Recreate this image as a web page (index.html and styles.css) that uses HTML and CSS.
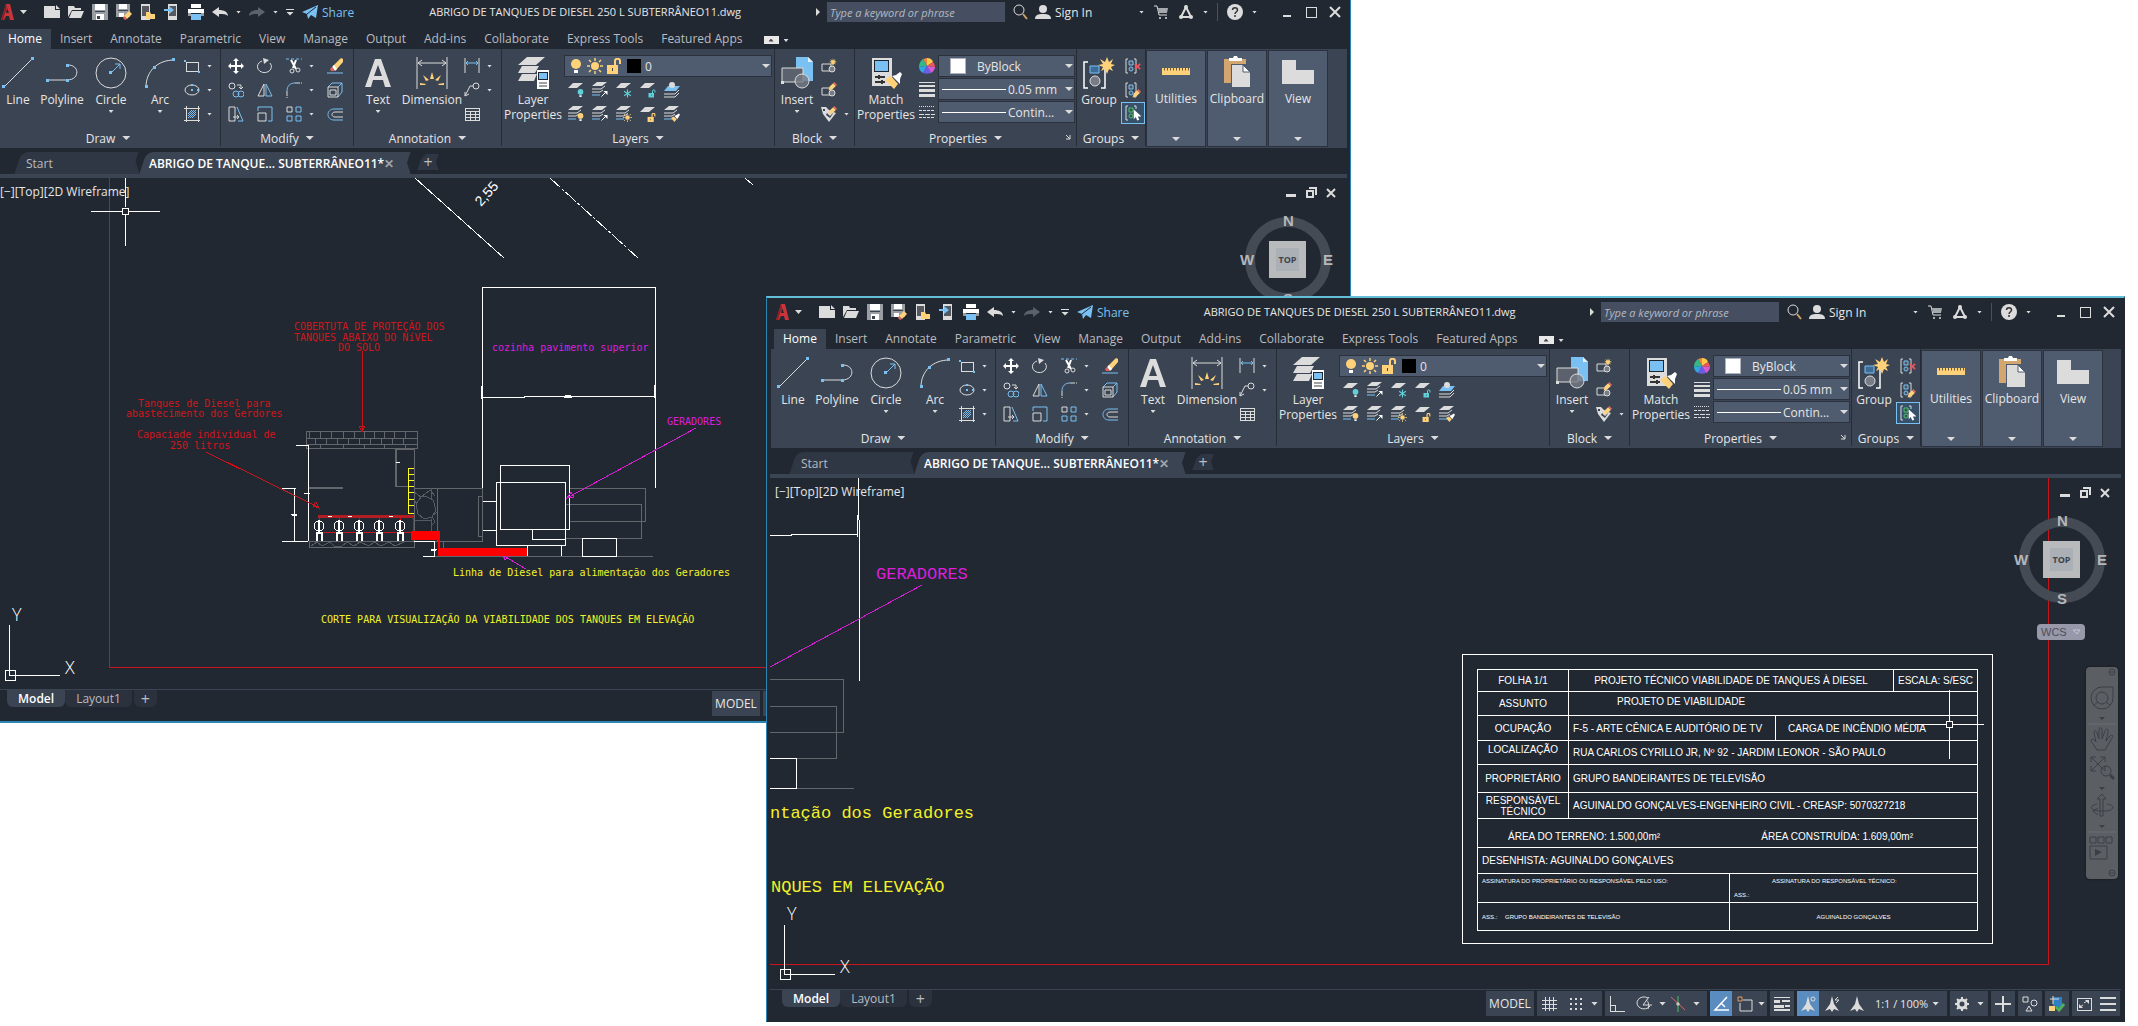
FILE: index.html
```
<!DOCTYPE html>
<html lang="pt-BR">

<head>
    <meta charset="UTF-8">
    <meta name="viewport" content="width=device-width, initial-scale=1.0">
    <title>ABRIGO DE TANQUES DE DIESEL 250 L SUBTERRÂNEO11.dwg</title>
    <link rel="stylesheet" href="styles.css">
</head>

<body>
    <!-- icon set -->
    <svg class="defs" aria-hidden="true">
        <symbol id="i-logo" viewBox="0 0 16 16"><path fill="#c9343a" d="M6 0h4l4 16h-4l-1-4H6l-2 4H1zM7 4L6 9h3z"/><path fill="#8d1f27" d="M6 0l-5 16h2L7 3z"/></symbol>
        <symbol id="i-new" viewBox="0 0 16 16"><path class="fw" d="M0 2h11v4h5v8H0z"/><path class="fw" d="M12 1l4 4h-4z"/></symbol>
        <symbol id="i-open" viewBox="0 0 16 16"><path class="fw" d="M0 2h6l1 2h6v2H4l-4 7z"/><path class="fw" d="M4 7h12l-3 7H1z"/></symbol>
        <symbol id="i-save" viewBox="0 0 16 16"><path fill="#9a9da1" d="M0 0h16v16H0z"/><path fill="#fff" d="M3 0h10v6H3zM4 10h8v6H4z"/><path class="fd" d="M3 7h10v1H3zM5 12h3v3H5z"/></symbol>
        <symbol id="i-saveas" viewBox="0 0 16 16"><path fill="#9a9da1" d="M0 0h14v13H0z"/><path fill="#fff" d="M3 0h8v5H3zM3 9h5v4H3z"/><path class="fd" d="M2 6h10v1H2z"/><path class="fy" d="M8 12l5-5 3 3-5 5z"/><path fill="#e0645c" d="M8 12l3 3-2 1-2-2z"/></symbol>
        <symbol id="i-openmob" viewBox="0 0 16 16"><path class="fw" d="M1 0h9v16H1z"/><path fill="#55585e" d="M2 2h7v10H2z"/><path class="fy" d="M6 8h4l1 2h4v5H6z"/></symbol>
        <symbol id="i-savemob" viewBox="0 0 16 16"><path class="fw" d="M4 0h9v16H4z"/><path fill="#55585e" d="M5 2h7v10H5z"/><path class="fb" d="M0 5h5V2l5 4-5 4V7H0z"/></symbol>
        <symbol id="i-print" viewBox="0 0 16 16"><path fill="#fff" d="M3 0h10v4H3zM0 5h16v7h-3V9H3v3H0z"/><path fill="#9a9da1" d="M0 9h3v3H0zM13 9h3v3h-3z"/><path class="fb" d="M3 10h10v6H3z"/></symbol>
        <symbol id="i-undo" viewBox="0 0 16 16"><path d="M0 8l7-5v3c5 0 9 2 9 6-2-2-5-2-9-2v3z"/></symbol>
        <symbol id="i-share" viewBox="0 0 16 16"><path class="fb" d="M0 8L16 1l-2 13-5-3-3 4-1-5z"/><path stroke="#222831" fill="none" d="M5 10l9-7"/></symbol>
        <symbol id="i-search" viewBox="0 0 16 16"><circle class="lw" cx="7" cy="6" r="5"/><path stroke="#cba36a" stroke-width="2" d="M11 10l4 5"/></symbol>
        <symbol id="i-user" viewBox="0 0 16 16"><circle class="fw" cx="8" cy="5" r="4"/><path class="fw" d="M0 15c0-4 3-5 8-5s8 1 8 5z"/></symbol>
        <symbol id="i-cart" viewBox="0 0 16 16"><path class="lw" d="M1 2h3l2 9h8"/><path fill="#a5a8ac" d="M5 4h10l-1 5H6z"/><circle class="fw" cx="7" cy="14" r="1"/><circle class="fw" cx="13" cy="14" r="1"/></symbol>
        <symbol id="i-apps" viewBox="0 0 16 16"><path fill="none" stroke="#dcdcdc" stroke-width="2" d="M8 3L3 13h10z"/><circle class="fw" cx="8" cy="3" r="2"/><circle class="fw" cx="3" cy="13" r="2"/><circle class="fw" cx="13" cy="13" r="2"/></symbol>
        <symbol id="i-help" viewBox="0 0 16 16"><circle class="fw" cx="8" cy="8" r="8"/><path fill="none" stroke="#333" stroke-width="1.5" d="M5.500 6c0-3 5-3 5 0 0 2-2.500 2-2.500 4M8 11v2"/></symbol>
        <symbol id="i-min" viewBox="0 0 12 12"><path class="fw" d="M2 9h8v2H2z"/></symbol>
        <symbol id="i-max" viewBox="0 0 12 12"><path class="lw crisp" d="M1 1h10v10H1z"/></symbol>
        <symbol id="i-close" viewBox="0 0 12 12"><path fill="none" stroke="#dcdcdc" stroke-width="2" d="M1 1l10 10M11 1L1 11"/></symbol>

        <symbol id="i-line" viewBox="0 0 32 32"><path class="lw" d="M2 30L30 2"/><path class="fb" d="M0 28h3v3H0zM29 0h3v3h-3z"/></symbol>
        <symbol id="i-pline" viewBox="0 0 32 32"><path class="lw" d="M2 23h19c13 0 13-15 1-15"/><path class="fb" d="M0 22h3v3H0zM20 22h3v3h-3zM20 7h3v3h-3z"/></symbol>
        <symbol id="i-circle" viewBox="0 0 32 32"><circle class="lw" cx="16" cy="16" r="15"/><path class="lb" d="M16 16l9-9M20 7h5v5"/><path class="fb" d="M14 14h3v3h-3z"/></symbol>
        <symbol id="i-arc" viewBox="0 0 32 32"><path class="lw" d="M2 30C2 14 14 3 30 3"/><path class="fb" d="M1 28h3v3H1zM9 9h3v3H9zM28 1h3v3h-3z"/></symbol>
        <symbol id="i-rect" viewBox="0 0 16 16"><path class="lw crisp" d="M2 4h12v9H2z"/><path class="fb" d="M0 2h2v2H0zM14 13h2v2h-2z"/></symbol>
        <symbol id="i-ellipse" viewBox="0 0 16 16"><ellipse class="lw" cx="8" cy="8" rx="7" ry="5"/><path class="fb" d="M7 7h2v2H7zM13 7h2v2h-2zM7 2h2v2H7z"/></symbol>
        <symbol id="i-hatch" viewBox="0 0 16 16"><path class="lw crisp" d="M2 0v16M14 0v16M0 2h16M0 14h16"/><path class="lb" d="M4 8l4-4M4 12l8-8M8 12l4-4M4 10l6-6M6 12l6-6"/></symbol>
        <symbol id="i-move" viewBox="0 0 16 16"><path fill="#fff" d="M8 0l3 3H9v4h4V5l3 3-3 3V9H9v4h2l-3 3-3-3h2V9H3v2L0 8l3-3v2h4V3H5z"/></symbol>
        <symbol id="i-rotate" viewBox="0 0 16 16"><path class="lw" d="M5 3a7 6 0 1 0 8 2"/><path class="fw" d="M6 0l6 2-5 4z"/></symbol>
        <symbol id="i-trim" viewBox="0 0 16 16"><path class="lb" stroke-dasharray="3 2" d="M0 1h16"/><path fill="none" stroke="#fff" stroke-width="2" d="M5 2l5 9M10 2L7 10"/><circle class="lw" cx="6" cy="13" r="2"/><circle class="lw" cx="12" cy="12" r="2"/></symbol>
        <symbol id="i-erase" viewBox="0 0 16 16"><path class="fy" d="M6 8l8-8 2 1v3l-7 8z"/><path fill="#fff" d="M5 9l2-2 3 4-2 2z"/><path fill="#e0645c" d="M3 11l2-2 3 4H4z"/><path class="lb" d="M0 15h16"/></symbol>
        <symbol id="i-copy" viewBox="0 0 16 16"><circle class="lw" cx="4" cy="4" r="3"/><path class="lw" d="M9 3h4v3M11 5l2 2 2-2"/><circle class="lb" cx="8" cy="12" r="3"/><circle class="lb" cx="13" cy="12" r="3"/></symbol>
        <symbol id="i-mirror" viewBox="0 0 16 16"><path class="lw" d="M7 2v12H1z"/><path class="lb" d="M9 2v12h6z"/></symbol>
        <symbol id="i-fillet" viewBox="0 0 16 16"><path class="lb" d="M1 9C1 4 4 1 9 1"/><path class="lw" stroke-dasharray="5 1" d="M1 9v7M9 1h7"/></symbol>
        <symbol id="i-box" viewBox="0 0 16 16"><path class="lb" d="M1 5l4-4h10v9l-4 5M15 1l-4 4"/><path class="lw" d="M1 5h10v10H1zM3 8h6v5H3z"/></symbol>
        <symbol id="i-stretch" viewBox="0 0 16 16"><path class="lw" d="M1 1h6v14H1zM5 11h6M9 9l2 2-2 2"/><path class="lb" d="M9 1l6 14h-5"/></symbol>
        <symbol id="i-scale" viewBox="0 0 16 16"><path class="lb" d="M1 5V1h14v14h-4"/><path class="lw" d="M1 7h8v8H1z"/></symbol>
        <symbol id="i-array" viewBox="0 0 16 16"><path class="lw" d="M1 1h5v5H1z"/><path class="lb" d="M10 1h5v5h-5zM1 10h5v5H1zM10 10h5v5h-5z"/></symbol>
        <symbol id="i-offset" viewBox="0 0 16 16"><path class="lb" d="M16 3H7c-8 0-8 11 0 11h9"/><path class="lw" d="M16 6H8c-4 0-4 5 0 5h8"/></symbol>
        <symbol id="i-text" viewBox="0 0 32 32"><path class="fw" d="M13 2h6l10 28h-6l-2-7H11l-2 7H3zM16 8l-4 11h8z"/></symbol>
        <symbol id="i-dim" viewBox="0 0 32 32"><path class="lw" d="M1 0v32M31 0v32M2 6h28M6 3L2 6l4 3M26 3l4 3-4 3"/><path class="fy" d="M14 22l2-7 2 7zM10 24l-3-6 6 5zM22 24l3-6-6 5zM9 28H4v-2l6 1zM23 28h5v-2l-6 1z"/></symbol>
        <symbol id="i-dimlin" viewBox="0 0 16 16"><path class="lw" d="M1 0v15M15 0v15"/><path class="lb" d="M2 5h12M4 3L2 5l2 2M12 3l2 2-2 2"/></symbol>
        <symbol id="i-leader" viewBox="0 0 16 16"><circle class="lw" cx="12" cy="4" r="3"/><path class="lw" d="M9 4H6l-5 10M1 10v4l4-2"/></symbol>
        <symbol id="i-table" viewBox="0 0 16 16"><path class="lw crisp" d="M1 2h14v12H1zM1 5h14M1 8h14M1 11h14M6 5v9M11 5v9"/></symbol>
        <symbol id="i-layers" viewBox="0 0 32 32"><path class="fw" d="M10 0h18l-9 8H1zM5 9h17l-4 7H1zM5 17h15l-3 7H1z"/><path fill="#fff" d="M20 13h12v19H20z"/><path fill="#1d2530" d="M21 15h10v8H21z"/><path class="fb" d="M22 16h8v6h-8z"/><path stroke="#444" d="M22 26h8M22 29h8"/></symbol>
        <symbol id="i-layer" viewBox="0 0 16 16"><path class="fw" d="M5 1h10L9 6H0z"/></symbol>
        <symbol id="i-stack" viewBox="0 0 16 16"><path class="fw" d="M5 0h10l-5 4H0z"/><path class="lw" d="M0 7h9l4-3M0 10h8l3-2"/><path class="lb" d="M0 13h8"/></symbol>
        <symbol id="i-bulb" viewBox="0 0 16 16"><circle cx="8" cy="6" r="5"/><path fill="#fff" d="M6 12h4v3H6z"/></symbol>
        <symbol id="i-sun" viewBox="0 0 16 16"><circle class="fy" cx="8" cy="8" r="4"/><path stroke="#ffd27a" stroke-width="1.500" d="M8 0v3M8 13v3M0 8h3M13 8h3M2 2l2 2M12 12l2 2M14 2l-2 2M4 12l-2 2"/></symbol>
        <symbol id="i-unlock" viewBox="0 0 16 16"><path d="M1 7h11v9H1z"/><path fill="none" stroke="currentColor" stroke-width="2" d="M9 7V3c0-3 5-3 5 0v3"/><path class="fd" d="M6 10h1v3H6z"/></symbol>
        <symbol id="i-flake" viewBox="0 0 16 16"><path stroke="#5fd0d8" stroke-width="2" d="M8 1v14M2 4l12 8M14 4L2 12"/></symbol>
        <symbol id="i-arrow" viewBox="0 0 16 16"><path stroke="#fff" stroke-width="2" d="M3 13L13 3"/><path fill="#fff" d="M7 2h8v8z"/></symbol>
        <symbol id="i-brush" viewBox="0 0 16 16"><path class="fy" d="M0 9l5-3 5 5-4 5z"/><path fill="#fff" d="M6 5l3-1 5-3 2 2-3 5-2 3z"/></symbol>
        <symbol id="i-insert" viewBox="0 0 32 32"><path class="fb" d="M15 0h12l5 5v19H15z"/><path fill="#dff0ff" d="M27 0v5h5z"/><path fill="#5b626d" stroke="#dcdcdc" d="M1 11h21v14H1z"/><circle fill="#777c86" fill-opacity=".8" stroke="#dcdcdc" cx="21" cy="24" r="7"/><path class="fw" d="M0 24h3v3H0z"/></symbol>
        <symbol id="i-block" viewBox="0 0 16 16"><path class="lw" d="M1 6h9v7H1z"/><circle fill="#777c86" stroke="#dcdcdc" cx="11" cy="11" r="3"/></symbol>
        <symbol id="i-star" viewBox="0 0 16 16"><path class="fy" d="M8 0l1 5 4-3-2 4 5 2-5 1 3 4-4-2-2 5-2-5-4 3 3-5-5-1 5-2-3-4 5 3z"/></symbol>
        <symbol id="i-pencil" viewBox="0 0 16 16"><path class="fy" d="M1 15l2-7 6-6 5 5-6 6z"/><path fill="#ee6a63" d="M9 2l2-2 5 5-2 2z"/></symbol>
        <symbol id="i-tag" viewBox="0 0 16 16"><path class="fw" d="M0 1h5l3 3 7 3-7 9-6-8z"/><path class="fd" d="M2 3h2v2H2zM6 7l3 3 4-4-4 6-4-3z"/></symbol>
        <symbol id="i-match" viewBox="0 0 32 32"><path class="fw" d="M2 1h20v28H2z"/><path fill="#1d2530" d="M4 3h15v12H4z"/><path class="fb" d="M5 4h13v10H5z"/><path stroke="#333" stroke-width="2" d="M5 20h10M5 25h10M9 18v4M12 23v4"/><path class="fy" d="M15 23l6-4 7 8-4 5z"/><path fill="#fff" d="M22 19l4-1 4-3 2 2-2 5v5z"/></symbol>
        <symbol id="i-wheel" viewBox="0 0 16 16"><path fill="#ffcb47" d="M8 8V0c3 0 5 1 6 4z"/><path fill="#f7813b" d="M8 8L4 1l4-1z"/><path fill="#35b888" d="M8 8L0 9c0-3 1-6 4-8z"/><path fill="#33a5e0" d="M8 8l-4 7c-2-1-4-3-4-6z"/><path fill="#6d5ce7" d="M8 8l4 7c-3 1-5 1-8 0z"/><path fill="#d65bd6" d="M8 8l8 1c0 2-2 5-4 6z"/><path fill="#f0545c" d="M8 8l6-4c1 1 2 3 2 5z"/></symbol>
        <symbol id="i-weight" viewBox="0 0 16 16"><path class="fw" d="M0 1h16v1H0zM0 4h16v2H0zM0 8h16v3H0zM0 13h16v3H0z"/></symbol>
        <symbol id="i-ltype" viewBox="0 0 16 16"><path class="lw crisp" stroke-dasharray="1 1" d="M0 2h16"/><path class="lw crisp" stroke-dasharray="3 1" d="M0 6h16M0 13h16"/><path class="lw crisp" stroke-dasharray="5 1" d="M0 10h16"/></symbol>
        <symbol id="i-group" viewBox="0 0 32 32"><path fill="none" stroke="#fff" stroke-width="1.500" d="M5 5H1v26h4M18 31h4V12"/><path fill="#3d6d97" stroke="#7ac0f2" d="M7 9h9v7H7z"/><circle fill="#777c86" stroke="#dcdcdc" cx="12" cy="24" r="5"/><path class="fy" d="M24 0l2 5 4-3-2 5 4 1-4 2 2 4-4-2-2 5-2-5-4 2 2-4-5-2 5-1-3-5 5 3z"/></symbol>
        <symbol id="i-grp" viewBox="0 0 16 16"><path class="lw" d="M3 1H1v14h2M9 1h2v14H9"/><path class="ls" d="M4 3h4v4H4z"/><circle class="ls" cx="6" cy="11" r="2"/></symbol>
        <symbol id="i-grp-on" viewBox="0 0 16 16"><path class="lw" d="M3 1H1v14h2M9 1h2v3"/><path class="lg" d="M4 3h4v4H4z"/><circle class="lg" cx="6" cy="11" r="2"/></symbol>
        <symbol id="i-cursor" viewBox="0 0 16 16"><path fill="#fff" d="M4 0l11 10h-5l2 5-3 1-2-5-3 3z"/></symbol>
        <symbol id="i-cross" viewBox="0 0 16 16"><path stroke="#e8545c" stroke-width="4" d="M2 2l12 12M14 2L2 14"/></symbol>
        <symbol id="i-ruler" viewBox="0 0 32 32"><path class="fy" d="M2 12h28v7H2z"/><path stroke="#6b5a36" stroke-dasharray="1 2" stroke-width="3" d="M4 13h25"/></symbol>
        <symbol id="i-clip" viewBox="0 0 32 32"><path fill="#d3a670" d="M3 3h22v24H3z"/><path fill="#fff" d="M8 2h4l1-2h3l1 2h4v3H8z"/><path fill="#4f5b6e" d="M10 8h20v24H10z"/><path class="fw" d="M11 9h11l7 7v15H11z"/><path fill="#fff" stroke="#4f5b6e" d="M22 9v7h7z"/></symbol>
        <symbol id="i-view" viewBox="0 0 32 32"><path class="fw" d="M0 4h14v10h18v14H0z"/></symbol>

        <symbol id="i-grid" viewBox="0 0 16 16"><path class="fw crisp" d="M4 1h1v14H4zM8 1h1v14H8zM12 1h1v14h-1zM1 4h15v1H1zM1 8h15v1H1zM1 12h15v1H1z"/></symbol>
        <symbol id="i-dots" viewBox="0 0 16 16"><path class="fw" d="M2 2h2v2H2zM7 2h2v2H7zM12 2h2v2h-2zM2 7h2v2H2zM7 7h2v2H7zM12 7h2v2h-2zM2 12h2v2H2zM7 12h2v2H7zM12 12h2v2h-2z"/></symbol>
        <symbol id="i-ortho" viewBox="0 0 16 16"><path class="lw crisp" d="M1 0v15h15M1 9h5v6"/></symbol>
        <symbol id="i-polar" viewBox="0 0 16 16"><path class="lw" d="M12 2a7 6 0 1 0 2 8M7 9l6-8M7 9h9M10 4c3 1 3 7 2 9"/></symbol>
        <symbol id="i-iso" viewBox="0 0 16 16"><path stroke="#4fbf6a" d="M8 0v16"/><path stroke="#e0645c" d="M1 1l14 13"/><path class="lw" d="M7 7h2v2H7z"/></symbol>
        <symbol id="i-track" viewBox="0 0 16 16"><path stroke="#fff" fill="none" stroke-width="1.500" d="M14 1L2 14h14M8 7l4 4"/></symbol>
        <symbol id="i-snap" viewBox="0 0 16 16"><path class="lw" d="M6 4h9v11H3V7"/><path fill="none" stroke="#e59a62" d="M1 1h4v4H1z"/></symbol>
        <symbol id="i-lwt" viewBox="0 0 16 16"><path class="fw" d="M0 1h16v1H0zM0 4h6v3H0zM8 4h8v2H8zM0 9h10v3H0zM11 9h5v2h-5zM0 13h16v2H0z"/></symbol>
        <symbol id="i-person" viewBox="0 0 16 16"><path class="fw" d="M8 0l2 8 5 7-5-2-2 3-2-3-5 2 5-7z"/></symbol>
        <symbol id="i-gear" viewBox="0 0 16 16"><circle fill="none" stroke="#dcdcdc" stroke-width="3" cx="8" cy="8" r="4"/><path stroke="#dcdcdc" stroke-width="2" d="M8 1v3M8 12v3M1 8h3M12 8h3M3 3l2 2M11 11l2 2M13 3l-2 2M5 11l-2 2"/></symbol>
        <symbol id="i-plus" viewBox="0 0 16 16"><path class="fw" d="M7 0h2v7h7v2H9v7H7V9H0V7h7z"/></symbol>
        <symbol id="i-isolate" viewBox="0 0 16 16"><path class="lw" d="M1 1h5v5H1zM7 10l3 5H4z"/><circle class="lw" cx="12" cy="7" r="3"/></symbol>
        <symbol id="i-hw" viewBox="0 0 16 16"><path fill="#2e7fc4" d="M4 1h9v10H4z"/><path class="lw" d="M1 3h9M4 0v8"/><path class="fy" d="M0 10h6v5H0z"/><path fill="none" stroke="#4fae5c" stroke-width="3" d="M7 11l3 3 5-6"/></symbol>
        <symbol id="i-full" viewBox="0 0 16 16"><path class="lw crisp" d="M1 2h14v12H1z"/><path class="fw" d="M9 4h4v4zM3 8v4h4z"/><path class="lw" d="M8 7l3-2M4 11l3-2"/></symbol>
        <symbol id="i-menu" viewBox="0 0 16 16"><path class="fw" d="M0 1h16v2H0zM0 7h16v2H0zM0 13h16v2H0z"/></symbol>
    </svg>

    <template id="tpl-head">
        <header class="titlebar">
            <button class="icon-btn" aria-label="Menu"><svg class="i16"><use href="#i-logo"/></svg></button>
            <span class="caret caret-m"></span>
            <div class="qat">
                <button class="icon-btn" aria-label="New"><svg class="i16"><use href="#i-new"/></svg></button>
                <button class="icon-btn" aria-label="Open"><svg class="i16"><use href="#i-open"/></svg></button>
                <button class="icon-btn" aria-label="Save"><svg class="i16"><use href="#i-save"/></svg></button>
                <button class="icon-btn" aria-label="Save As"><svg class="i16"><use href="#i-saveas"/></svg></button>
                <button class="icon-btn" aria-label="Open from mobile"><svg class="i16"><use href="#i-openmob"/></svg></button>
                <button class="icon-btn" aria-label="Save to mobile"><svg class="i16"><use href="#i-savemob"/></svg></button>
                <button class="icon-btn" aria-label="Plot"><svg class="i16"><use href="#i-print"/></svg></button>
                <button class="icon-btn" aria-label="Undo"><svg class="i16 fw"><use href="#i-undo"/></svg></button>
                <span class="caret"></span>
                <button class="icon-btn flip" aria-label="Redo"><svg class="i16 dim"><use href="#i-undo"/></svg></button>
                <span class="caret"></span>
                <span class="qat-more"><span class="caret caret-l"></span></span>
                <button class="share"><svg class="i16"><use href="#i-share"/></svg>Share</button>
            </div>
            <div class="doc-title">ABRIGO DE TANQUES DE DIESEL 250 L SUBTERRÂNEO11.dwg</div>
            <div class="search-area">
                <span class="caret-right"></span>
                <input class="search" type="text" placeholder="Type a keyword or phrase" aria-label="Search">
                <button class="icon-btn" aria-label="Search"><svg class="i16"><use href="#i-search"/></svg></button>
                <button class="sign-in"><svg class="i16"><use href="#i-user"/></svg>Sign In</button>
            </div>
            <div class="account">
                <span class="caret"></span>
                <button class="icon-btn" aria-label="Store"><svg class="i16"><use href="#i-cart"/></svg></button>
                <button class="icon-btn" aria-label="Apps"><svg class="i16"><use href="#i-apps"/></svg></button>
                <span class="caret"></span>
                <span class="sep"></span>
                <button class="icon-btn" aria-label="Help"><svg class="i16"><use href="#i-help"/></svg></button>
                <span class="caret"></span>
            </div>
            <div class="win-btns">
                <button class="icon-btn" aria-label="Minimize"><svg class="i12"><use href="#i-min"/></svg></button>
                <button class="icon-btn" aria-label="Maximize"><svg class="i12"><use href="#i-max"/></svg></button>
                <button class="icon-btn" aria-label="Close"><svg class="i12"><use href="#i-close"/></svg></button>
            </div>
        </header>
        <nav class="tabs">
            <a href="#" class="active">Home</a>
            <a href="#">Insert</a>
            <a href="#">Annotate</a>
            <a href="#">Parametric</a>
            <a href="#">View</a>
            <a href="#">Manage</a>
            <a href="#">Output</a>
            <a href="#">Add-ins</a>
            <a href="#">Collaborate</a>
            <a href="#">Express Tools</a>
            <a href="#">Featured Apps</a>
            <button class="ribbon-toggle" aria-label="Minimize ribbon"></button>
            <span class="caret"></span>
        </nav>
        <div class="ribbon">
            <section class="panel p-draw">
                <div class="tools">
                    <button class="big narrow"><svg class="i32"><use href="#i-line"/></svg>Line</button>
                    <button class="big narrow"><svg class="i32"><use href="#i-pline"/></svg>Polyline</button>
                    <button class="big circle"><svg class="i32"><use href="#i-circle"/></svg>Circle<span class="caret"></span></button>
                    <button class="big narrow"><svg class="i32"><use href="#i-arc"/></svg>Arc<span class="caret"></span></button>
                    <div class="smalls one">
                        <button class="sm"><svg class="i16"><use href="#i-rect"/></svg><span class="caret"></span></button>
                        <button class="sm"><svg class="i16"><use href="#i-ellipse"/></svg><span class="caret"></span></button>
                        <button class="sm"><svg class="i16"><use href="#i-hatch"/></svg><span class="caret"></span></button>
                    </div>
                </div>
                <h2>Draw <span class="caret caret-l"></span></h2>
            </section>
            <section class="panel p-modify">
                <div class="tools">
                    <div class="smalls four">
                        <button class="sm"><svg class="i16"><use href="#i-move"/></svg></button>
                        <button class="sm"><svg class="i16"><use href="#i-rotate"/></svg></button>
                        <button class="sm"><svg class="i16"><use href="#i-trim"/></svg><span class="caret"></span></button>
                        <button class="sm"><svg class="i16"><use href="#i-erase"/></svg></button>
                        <button class="sm"><svg class="i16"><use href="#i-copy"/></svg></button>
                        <button class="sm"><svg class="i16"><use href="#i-mirror"/></svg></button>
                        <button class="sm"><svg class="i16"><use href="#i-fillet"/></svg><span class="caret"></span></button>
                        <button class="sm"><svg class="i16"><use href="#i-box"/></svg></button>
                        <button class="sm"><svg class="i16"><use href="#i-stretch"/></svg></button>
                        <button class="sm"><svg class="i16"><use href="#i-scale"/></svg></button>
                        <button class="sm"><svg class="i16"><use href="#i-array"/></svg><span class="caret"></span></button>
                        <button class="sm"><svg class="i16"><use href="#i-offset"/></svg></button>
                    </div>
                </div>
                <h2>Modify <span class="caret caret-l"></span></h2>
            </section>
            <section class="panel p-annot">
                <div class="tools">
                    <button class="big"><svg class="i32"><use href="#i-text"/></svg>Text<span class="caret"></span></button>
                    <button class="big dim-btn"><svg class="i32"><use href="#i-dim"/></svg>Dimension</button>
                    <div class="smalls one">
                        <button class="sm"><svg class="i16"><use href="#i-dimlin"/></svg><span class="caret"></span></button>
                        <button class="sm"><svg class="i16"><use href="#i-leader"/></svg><span class="caret"></span></button>
                        <button class="sm"><svg class="i16"><use href="#i-table"/></svg></button>
                    </div>
                </div>
                <h2>Annotation <span class="caret caret-l"></span></h2>
            </section>
            <section class="panel p-layers">
                <div class="tools">
                    <button class="big wide"><svg class="i32"><use href="#i-layers"/></svg>Layer<br>Properties</button>
                    <div class="layer-tools">
                        <div class="combo layer-combo">
                            <select aria-label="Layer"><option>0</option></select>
                            <span class="combo-icons"><svg class="i16 fy"><use href="#i-bulb"/></svg><svg class="i16"><use href="#i-sun"/></svg><svg class="i16 lock"><use href="#i-unlock"/></svg><i class="swatch black"></i></span>
                        </div>
                        <div class="smalls five">
                            <button class="sm"><svg class="i16"><use href="#i-layer"/><use class="teal" href="#i-bulb" x="8" y="6" width="9" height="10"/></svg></button>
                            <button class="sm"><svg class="i16"><use href="#i-stack"/><use href="#i-arrow" x="8" y="8" width="8" height="8"/></svg></button>
                            <button class="sm"><svg class="i16"><use href="#i-layer"/><use href="#i-flake" x="7" y="7" width="9" height="9"/></svg></button>
                            <button class="sm"><svg class="i16"><use href="#i-layer"/><use class="teal" href="#i-unlock" x="8" y="7" width="8" height="9"/></svg></button>
                            <button class="sm"><svg class="i16"><path class="fb" d="M4 4h12l-4 5H0z"/><circle class="fw" cx="8" cy="3" r="3"/><path class="lw" d="M0 12h11l4-4M0 15h11l4-4"/></svg></button>
                            <button class="sm"><svg class="i16"><use href="#i-stack"/><use class="fy" href="#i-bulb" x="8" y="6" width="9" height="10"/></svg></button>
                            <button class="sm"><svg class="i16"><use href="#i-stack"/><use href="#i-arrow" x="8" y="8" width="8" height="8"/></svg></button>
                            <button class="sm"><svg class="i16"><use href="#i-stack"/><use href="#i-sun" x="7" y="7" width="9" height="9"/></svg></button>
                            <button class="sm"><svg class="i16"><use href="#i-layer"/><use class="lock" href="#i-unlock" x="7" y="7" width="9" height="9"/></svg></button>
                            <button class="sm"><svg class="i16"><use href="#i-stack"/><use href="#i-brush" x="7" y="7" width="9" height="9"/></svg></button>
                        </div>
                    </div>
                </div>
                <h2>Layers <span class="caret caret-l"></span></h2>
            </section>
            <section class="panel p-block">
                <div class="tools">
                    <button class="big narrow"><svg class="i32"><use href="#i-insert"/></svg>Insert<span class="caret"></span></button>
                    <div class="smalls one">
                        <button class="sm"><svg class="i16"><use href="#i-block"/><use href="#i-star" x="8" y="0" width="8" height="8"/></svg></button>
                        <button class="sm"><svg class="i16"><use href="#i-block"/><use href="#i-pencil" x="7" y="0" width="9" height="9"/></svg></button>
                        <button class="sm"><svg class="i16"><use href="#i-tag"/><use href="#i-pencil" x="7" y="0" width="9" height="9"/></svg><span class="caret"></span></button>
                    </div>
                </div>
                <h2>Block <span class="caret caret-l"></span></h2>
            </section>
            <section class="panel p-props">
                <div class="tools">
                    <button class="big wide"><svg class="i32"><use href="#i-match"/></svg>Match<br>Properties</button>
                    <div class="props">
                        <svg class="i16"><use href="#i-wheel"/></svg>
                        <div class="combo"><select class="with-swatch" aria-label="Object color"><option>ByBlock</option></select><span class="combo-icons one-icon"><i class="swatch"></i></span></div>
                        <svg class="i16"><use href="#i-weight"/></svg>
                        <div class="combo"><select class="with-line" aria-label="Lineweight"><option>0.05 mm</option></select></div>
                        <svg class="i16"><use href="#i-ltype"/></svg>
                        <div class="combo"><select class="with-line" aria-label="Linetype"><option>Contin...</option></select></div>
                    </div>
                </div>
                <h2>Properties <span class="caret caret-l"></span></h2>
                <button class="launcher" aria-label="Properties palette"><svg class="i6"><path class="lw" d="M1 1l4 4M5 1v4H1"/></svg></button>
            </section>
            <section class="panel p-groups">
                <div class="tools">
                    <button class="big narrow"><svg class="i32"><use href="#i-group"/></svg>Group</button>
                    <div class="smalls grp">
                        <button class="sm"><svg class="i16"><use href="#i-grp"/><use href="#i-cross" x="9" y="5" width="7" height="7"/></svg></button>
                        <button class="sm"><svg class="i16"><use href="#i-grp"/><use href="#i-pencil" x="7" y="7" width="9" height="9"/></svg></button>
                        <button class="sm on"><svg class="i16"><use href="#i-grp-on"/><use href="#i-cursor" x="6" y="4" width="11" height="12"/></svg></button>
                    </div>
                </div>
                <h2>Groups <span class="caret caret-l"></span></h2>
            </section>
            <button class="folded"><svg class="i32"><use href="#i-ruler"/></svg>Utilities<span class="caret caret-l"></span></button>
            <button class="folded"><svg class="i32"><use href="#i-clip"/></svg>Clipboard<span class="caret caret-l"></span></button>
            <button class="folded"><svg class="i32"><use href="#i-view"/></svg>View<span class="caret caret-l"></span></button>
        </div>
        <div class="file-tabs">
            <a href="#" class="file-tab start">Start</a>
            <a href="#" class="file-tab current">ABRIGO DE TANQUE... SUBTERRÂNEO11* <span class="x">✕</span></a>
            <button class="file-tab add" aria-label="New drawing">+</button>
        </div>
    </template>

    <template id="tpl-overlay">
        <div class="view-label">[−][Top][2D Wireframe]</div>
        <div class="doc-btns">
            <button class="icon-btn" aria-label="Minimize view"><svg class="i12"><path class="fw" d="M1 7h10v3H1z"/></svg></button>
            <button class="icon-btn" aria-label="Restore view"><svg class="i12"><path fill="none" stroke="#dcdcdc" stroke-width="2" d="M2 4h6v6H2zM4 1h7v7"/></svg></button>
            <button class="icon-btn" aria-label="Close view"><svg class="i12"><path fill="none" stroke="#dcdcdc" stroke-width="2" d="M2 2l8 8M10 2l-8 8"/></svg></button>
        </div>
        <div class="viewcube">
            <span class="n">N</span><span class="w">W</span><span class="e">E</span><span class="s">S</span>
            <button class="cube">TOP</button>
        </div>
    </template>

    <template id="tpl-foot">
        <a href="#" class="layout-tab model">Model</a>
        <a href="#" class="layout-tab">Layout1</a>
        <button class="layout-tab plus" aria-label="New layout">+</button>
        <div class="status">
            <button class="st st-model">MODEL</button>
            <div class="st-group">
                <button class="st"><svg class="i16"><use href="#i-grid"/></svg></button>
                <button class="st"><svg class="i16"><use href="#i-dots"/></svg></button>
                <span class="caret caret-m"></span>
            </div>
            <div class="st-group roomy">
                <button class="st"><svg class="i16"><use href="#i-ortho"/></svg></button>
                <button class="st"><svg class="i16"><use href="#i-polar"/></svg></button>
                <span class="caret caret-m"></span>
                <button class="st"><svg class="i16"><use href="#i-iso"/></svg></button>
                <span class="caret caret-m"></span>
            </div>
            <div class="st-group joined">
                <button class="st on"><svg class="i16"><use href="#i-track"/></svg></button>
                <button class="st"><svg class="i16"><use href="#i-snap"/></svg></button>
                <span class="caret caret-m"></span>
            </div>
            <button class="st"><svg class="i16"><use href="#i-lwt"/></svg></button>
            <div class="st-group joined">
                <button class="st on"><svg class="i16"><use href="#i-person"/><circle class="lw" cx="13" cy="3" r="2"/></svg></button>
                <button class="st"><svg class="i16"><use href="#i-person"/><path class="lw" d="M14 1l-3 3h4l-3 3"/></svg></button>
                <button class="st"><svg class="i16"><use href="#i-person"/></svg></button>
                <button class="st scale">1:1 / 100% <span class="caret caret-m"></span></button>
            </div>
            <div class="st-group">
                <button class="st"><svg class="i16"><use href="#i-gear"/></svg></button>
                <span class="caret caret-m"></span>
            </div>
            <button class="st"><svg class="i16"><use href="#i-plus"/></svg></button>
            <button class="st"><svg class="i16"><use href="#i-isolate"/></svg></button>
            <button class="st"><svg class="i16"><use href="#i-hw"/></svg></button>
            <div class="st-group last">
                <button class="st"><svg class="i16"><use href="#i-full"/></svg></button>
                <button class="st"><svg class="i16"><use href="#i-menu"/></svg></button>
            </div>
        </div>
    </template>

    <main class="desktop">
        <!-- section view -->
        <section class="window back">
            <div class="head" data-part="tpl-head"></div>
            <div class="canvas">
                <svg class="drawing">
                    <g transform="translate(5 -178)">
                        <path class="red-line" d="M109 178v489h700"/>
                        <path class="white-line" d="M415 178l89 80M745 178l8 7"/>
                        <path class="white-line" stroke-dasharray="14 2 3 2" d="M550 178l88 80"/>
                        <text class="cad-dim" transform="translate(481 207) rotate(-48)">2,55</text>

                        <!-- upper floor -->
                        <path class="white-line" d="M482 488V287h173v201M482 397h42v-1h130M481 386v13M654 385v13M564 397h8M565 395h6"/>
                        <text class="cad magenta" x="492" y="351">cozinha pavimento superior</text>

                        <!-- generators -->
                        <path class="grey-line" d="M414 488h68v53h-68M437 488v54M482 496h-4v40h4M569 488h76v33h-76M565 504h76v34h-76M432 556h221M443 541v15"/>
                        <path class="white-line" d="M500 465h69v64h-69zM496 482h69v63h-69zM483 501h14M483 530h14M532 529v10h33M527 545v11M561 545v11M582 538h34v18h-34z"/>
                        <path class="magenta-line" d="M696 428L567 498M567 498l4-6 3 5zM526 569l-22-13M503 555l6 1-4 4z"/>
                        <text class="cad magenta" x="667" y="425">GERADORES</text>

                        <!-- tank shelter -->
                        <path class="grey-line" d="M306 431h111v17H306zM306 438h111M306 444h111M309 432v6M320 432v6M331 432v6M343 432v6M354 432v6M364 432v6M374 432v6M384 432v6M394 432v6M405 432v6M315 438v6M326 438v6M337 438v6M348 438v6M359 438v6M370 438v6M381 438v6M392 438v6M403 438v6M320 444v4M343 444v4M364 444v4M384 444v4M405 444v4M414 448v93M308 448v93M308 487h35M308 488h35M414 449h-19v37h19M396 449v37M309 541h105v6H309z"/>
                        <path class="grey-line stone" d="M414 492l7 5 9-7 5 6M421 497l-5 7 2 10 6 5 8-2 4-7-3-10-8-4zM414 520l8 1 9-1v11M414 500l3 4M437 512l-5 4 3 6-4 4M431 488v12M311 546l6-4 5 4 8-4 4 4h8l5-4 7 4 6-4 9 4 5-4 7 4 8-4 6 4 9-4"/>
                        <path class="yellow-line" d="M414 468h-6v45h6M408 474h6M408 480h6M408 486h6M408 492h6M408 499h6M408 505h6M414 541h8"/>
                        <path class="red-pipe" d="M318 516h96"/>
                        <path class="red-line" d="M413 516v25M319 532h92M319 516v16M339 516v6M359 516v6M379 516v6M400 516v6"/>
                        <g class="tanks">
                            <circle cx="319" cy="526" r="5"/><circle cx="339" cy="526" r="5"/><circle cx="359" cy="526" r="5"/><circle cx="379" cy="526" r="5"/><circle cx="400" cy="526" r="5"/>
                            <path d="M319 520v12M339 520v12M359 520v12M379 520v12M400 520v12M317 541v-8h5v8M337 541v-8h5v8M357 541v-8h5v8M377 541v-8h5v8M398 541v-8h5v8"/>
                        </g>
                        <path class="white-line" d="M308 541V445h-12M282 488h14M294 488v53M282 541h26M291 514h6M292 515h5M304 493h6M396 462h4M328 516h4M348 516h4M389 516h4M414 541h20v15h-11M431 549h6M431 550h5"/>
                        <path class="red-fill" d="M411 531h29v17h87v8h-89v-16h-27z"/>
                        <path class="red-line" d="M362 351v80M359 426h6l-3 6zM206 452l112 55M313 506l6 2-3-6z"/>
                        <text class="cad red" x="294" y="330">COBERTUTA DE PROTEÇÃO DOS</text>
                        <text class="cad red" x="294" y="341">TANQUES ABAIXO DO NíVEL</text>
                        <text class="cad red" x="338" y="351">DO SOLO</text>
                        <text class="cad red" x="138" y="407">Tanques de Diesel para</text>
                        <text class="cad red" x="126" y="417">abastecimento dos Gerdores</text>
                        <text class="cad red" x="137" y="438">Capaciade individual de</text>
                        <text class="cad red" x="170" y="449">250 litros</text>
                        <text class="cad yellow" x="453" y="576">Linha de Diesel para alimentação dos Geradores</text>
                        <text class="cad yellow" x="321" y="623">CORTE PARA VISUALIZAÇÃO DA VIABILIDADE DOS TANQUES EM ELEVAÇÃO</text>

                        <path class="white-line" d="M9 625v50h51M5 670h10v10H5z"/>
                        <text class="ucs" x="12" y="621">Y</text>
                        <text class="ucs" x="65" y="674">X</text>
                        <path class="white-line" d="M91 211h31M129 211h31M125 178v29M125 215v31M122 208h6v6h-6z"/>
                    </g>
                </svg>
                <div class="overlay" data-part="tpl-overlay"></div>
            </div>
            <footer class="foot" data-part="tpl-foot"></footer>
        </section>

        <!-- title block view -->
        <section class="window front">
            <div class="head" data-part="tpl-head"></div>
            <div class="canvas">
                <svg class="drawing">
                    <g transform="translate(-770 -478)">
                        <path class="grey-line" d="M770 679h73v53h-73M770 706h66v52h-66M796 788h58"/>
                        <path class="white-line" d="M858 478v42M859 520v161M857 515v22M770 535h21v-1h66M770 758h26v30h-26"/>
                        <path class="magenta-line" d="M922 585L770 667"/>
                        <text class="cad cad-big magenta" x="876" y="579">GERADORES</text>
                        <text class="cad cad-big yellow" x="770" y="818">ntação dos Geradores</text>
                        <text class="cad cad-big yellow" x="771" y="892">NQUES EM ELEVAÇÃO</text>
                        <path class="red-line" d="M770 964h1278V478"/>
                        <path class="white-line" d="M784 925v49h51M780 969h10v10h-10z"/>
                        <text class="ucs" x="787" y="920">Y</text>
                        <text class="ucs" x="840" y="973">X</text>
                    </g>
                </svg>
                <div class="title-block">
                    <table>
                        <colgroup><col class="c1"><col class="c2"><col class="c3"><col class="c4"><col class="c5"></colgroup>
                        <tr class="h22"><th>FOLHA 1/1</th><td colspan="3" class="mid">PROJETO TÉCNICO VIABILIDADE DE TANQUES À DIESEL</td><td class="mid">ESCALA: S/ESC</td></tr>
                        <tr class="h24"><th>ASSUNTO</th><td colspan="4" class="indent">PROJETO DE VIABILIDADE</td></tr>
                        <tr class="h25"><th>OCUPAÇÃO</th><td colspan="2">F-5 - ARTE CÊNICA E AUDITÓRIO DE TV</td><td colspan="2" class="pad">CARGA DE INCÊNDIO MÉDIA</td></tr>
                        <tr class="h24"><th class="up">LOCALIZAÇÃO</th><td colspan="4">RUA CARLOS CYRILLO JR, Nº 92 - JARDIM LEONOR - SÃO PAULO</td></tr>
                        <tr class="h28"><th>PROPRIETÁRIO</th><td colspan="4">GRUPO BANDEIRANTES DE TELEVISÃO</td></tr>
                        <tr class="h26"><th>RESPONSÁVEL<br>TÉCNICO</th><td colspan="4">AGUINALDO GONÇALVES-ENGENHEIRO CIVIL - CREASP: 5070327218</td></tr>
                        <tr class="h29"><td colspan="5"><div class="areas"><span>ÁREA DO TERRENO: 1.500,00m²</span><span>ÁREA CONSTRUÍDA: 1.609,00m²</span></div></td></tr>
                        <tr class="h26"><td colspan="5">DESENHISTA: AGUINALDO GONÇALVES</td></tr>
                        <tr class="h29 fine"><td colspan="2">ASSINATURA DO PROPRIETÁRIO OU RESPONSÁVEL PELO USO:</td><td colspan="3"><div class="sign">ASSINATURA DO RESPONSÁVEL TÉCNICO:</div><div>ASS.:</div></td></tr>
                        <tr class="h28 fine last"><td colspan="2">ASS.: <span class="owner">GRUPO BANDEIRANTES DE TELEVISÃO</span></td><td colspan="3" class="mid">AGUINALDO GONÇALVES</td></tr>
                    </table>
                    <svg class="crosshair"><path class="white-line" d="M0 34h31M38 34h31M34 0v31M34 38v31M31 31h6v6h-6z"/></svg>
                </div>
                <div class="overlay" data-part="tpl-overlay"></div>
                <button class="wcs">WCS <svg class="wcs-arrow"><path fill="none" stroke="#c4c6d2" d="M1 1h7L5 5z"/></svg></button>
                <div class="navbar">
                    <svg class="nav-icons">
                        <g class="nav-line">
                            <circle cx="26" cy="5" r="3"/><path d="M24 5h4"/>
                            <path d="M16 20h11v11a11 11 0 1 1-11-11z"/><circle cx="16" cy="31" r="6"/><path d="M8 38l4-3M24 38l-4-3"/>
                            <path d="M11 83l-6-9c0-3 3-2 5 1l-2-9c0-3 2-3 3 0l2 6v-9c0-3 3-3 3 0v9l3-8c1-3 4-2 3 1l-2 9 4-5c2-2 4 0 2 2l-7 12z"/>
                            <path d="M5 90l14 14M19 90L5 104M5 95v-5h5M14 90h5v5M5 99v5h5M19 99v5"/><circle cx="20" cy="104" r="5"/><path stroke-width="3" d="M24 108l4 4"/>
                            <path d="M14 149v-17h-3l5-5 4 5h-3v17z"/><path d="M11 137c-8 2-8 6 2 7h7c9-1 9-6 1-7M12 141l-5 3 5 4"/>
                            <path d="M4 170h6v6H4zM12 170h6v6h-6zM20 170h6v6h-6zM4 179h17v13H4z"/><circle cx="26" cy="206" r="3"/><path d="M24 206h4"/>
                        </g>
                        <path class="nav-fill" d="M9 182v7l7-4zM13 50h6l-3 3zM13 120h6l-3 3zM13 158h6l-3 3z"/>
                        <path class="nav-div" d="M2 57h28M2 165h28"/>
                    </svg>
                </div>
            </div>
            <footer class="foot" data-part="tpl-foot"></footer>
        </section>
    </main>

    <script>
        // both windows share the same chrome
        document.querySelectorAll('[data-part]').forEach((el) => {
            const tpl = document.getElementById(el.dataset.part);
            el.appendChild(tpl.content.cloneNode(true));
        });
    </script>
</body>

</html>
```
FILE: styles.css
```
* {
    box-sizing: border-box;
}

body {
    margin: 0;
    background: #fff;
    font-family: "Open Sans", "Noto Sans", sans-serif;
    font-size: 12px;
    color: #e6e6e6;
}

button {
    background: none;
    border: none;
    padding: 0;
    margin: 0;
    font: inherit;
    color: inherit;
}

a {
    color: inherit;
    text-decoration: none;
}

svg {
    display: block;
    flex: none;
}

.defs {
    position: absolute;
    width: 0;
    height: 0;
}

/* icon colours */
.fw { fill: #dcdcdc; }
.fb { fill: #7ac0f2; }
.fy { fill: #ffd27a; }
.fd { fill: #3b4453; }
.dim { fill: #5c626b; }
.lw { fill: none; stroke: #dcdcdc; }
.lb { fill: none; stroke: #7ac0f2; }
.ls { fill: #4d5663; stroke: #7ac0f2; }
.lg { fill: #2f5a4a; stroke: #4fbf6a; }
.teal { fill: #5fd0d8; color: #5fd0d8; }
.lock { fill: #ffd27a; color: #ffd27a; }
.crisp { shape-rendering: crispEdges; }
.flip { transform: scaleX(-1); }

.i6 { width: 6px; height: 6px; }
.i12 { width: 12px; height: 12px; }
.i16 { width: 16px; height: 16px; }
.i32 { width: 32px; height: 32px; }

.caret {
    display: inline-block;
    flex: none;
    width: 5px;
    height: 3px;
    background: #dcdcdc;
    clip-path: polygon(0 0, 100% 0, 50% 100%);
}

.caret-m {
    width: 7px;
    height: 4px;
}

.caret-l {
    width: 8px;
    height: 4px;
}

/* windows */
.desktop {
    position: relative;
    height: 100vh;
    overflow: hidden;
}

.window {
    position: absolute;
    display: flex;
    flex-direction: column;
    background: #222831;
    border: 1px solid #2c86b4;
    border-top: 2px solid #63bfd8;
    overflow: hidden;
}

.window.back {
    left: -9px;
    right: 787px;
    top: -4px;
    bottom: 303px;
    border-bottom-width: 2px;
}

.window.front {
    left: 766px;
    right: 13px;
    top: 296px;
    bottom: 4px;
    border-right-color: #222831;
    border-bottom-color: #222831;
}

/* title bar */
.titlebar {
    display: flex;
    align-items: center;
    height: 28px;
    padding: 0 9px 0 8px;
}

.titlebar > .caret {
    margin-left: 4px;
}

.qat {
    display: flex;
    align-items: center;
    gap: 8px;
    margin-left: 17px;
}

.qat-more {
    display: flex;
    padding-top: 2px;
    border-top: 1px solid #dcdcdc;
}

.share,
.sign-in {
    display: flex;
    align-items: center;
    gap: 4px;
}

.share {
    color: #7ac0f2;
}

.sign-in {
    width: 97px;
}

.doc-title {
    flex: 1;
    text-align: center;
    font-size: 11px;
    line-height: 16px;
    white-space: nowrap;
}

.search-area {
    display: flex;
    align-items: center;
    gap: 7px;
}

.caret-right {
    width: 4px;
    height: 8px;
    background: #dcdcdc;
    clip-path: polygon(0 0, 100% 50%, 0 100%);
}

.search {
    width: 178px;
    height: 20px;
    padding: 0 3px;
    border: none;
    background: #454f61;
    font: italic 11px "Open Sans", sans-serif;
    color: #e6e6e6;
}

.search::placeholder {
    color: #b4b9c2;
    opacity: 1;
}

.account {
    display: flex;
    align-items: center;
    gap: 9px;
    margin-left: 7px;
}

.sep {
    width: 1px;
    height: 18px;
    background: #4a515c;
}

.win-btns {
    display: flex;
    gap: 12px;
    margin-left: 24px;
}

/* ribbon tabs */
.tabs {
    display: flex;
    align-items: flex-end;
    height: 23px;
    padding-left: 7px;
    color: #b9bcc1;
}

.tabs a {
    padding: 0 9px;
    height: 20px;
    line-height: 20px;
}

.tabs a.active {
    background: #3b4453;
    color: #fff;
}

.ribbon-toggle {
    width: 15px;
    height: 8px;
    margin: 0 5px 5px 12px;
    background: #e8e8e8;
}

.ribbon-toggle::before {
    content: "";
    display: block;
    width: 5px;
    height: 3px;
    margin: 0 auto;
    background: #444;
    clip-path: polygon(50% 0, 100% 100%, 0 100%);
}

.tabs .caret {
    margin-bottom: 7px;
}

/* ribbon */
.ribbon {
    display: flex;
    height: 99px;
    margin: 0 3px 0 4px;
    background: #3b4453;
}

.panel {
    position: relative;
    display: flex;
    flex: none;
    flex-direction: column;
    border-right: 1px solid #262c36;
    height: 97px;
}

.p-draw { width: 225px; }
.p-modify { width: 133px; }
.p-annot { width: 148px; }
.p-layers { width: 273px; }
.p-block { width: 80px; }
.p-props { width: 222px; }
.p-groups { width: 69px; }

.tools {
    display: flex;
    align-items: flex-start;
    height: 81px;
    padding-top: 5px;
}

.panel h2 {
    display: flex;
    align-items: center;
    justify-content: center;
    gap: 7px;
    height: 16px;
    margin: 0;
    font-size: 12px;
    font-weight: normal;
}

.big {
    display: flex;
    flex-direction: column;
    align-items: center;
    flex: none;
    width: 48px;
    padding-top: 3px;
    line-height: 15px;
    white-space: nowrap;
}

.big.narrow { width: 44px; }
.big.circle { width: 54px; }
.big.dim-btn { width: 60px; }
.big.wide { width: 62px; }

.big svg {
    margin-bottom: 3px;
}

.big .caret {
    margin-top: 3px;
}

.smalls {
    display: grid;
    grid-auto-rows: 24px;
}

.smalls.one { padding-left: 2px; }
.smalls.four { grid-template-columns: 29px 29px 41px 16px; padding-left: 7px; }
.smalls.five { grid-template-columns: repeat(5, 24px); padding-left: 4px; }

.sm {
    display: flex;
    align-items: center;
    gap: 7px;
}

.grp .sm {
    width: 24px;
    justify-content: center;
}

.sm.on {
    height: 22px;
    background: #38516b;
    border: 1px solid #7ac0f2;
}

/* drop-downs */
.combo {
    position: relative;
    height: 22px;
}

.combo select {
    appearance: none;
    width: 100%;
    height: 22px;
    padding: 0 12px 0 80px;
    border: 1px solid #2b323e;
    border-radius: 0;
    background: #4f5b6e;
    color: #e6e6e6;
    font: inherit;
}

.combo::after {
    content: "";
    position: absolute;
    right: 2px;
    top: 9px;
    width: 8px;
    height: 4px;
    background: #dcdcdc;
    clip-path: polygon(0 0, 100% 0, 50% 100%);
}

.combo-icons {
    position: absolute;
    left: 4px;
    top: 3px;
    display: flex;
    gap: 3px;
    pointer-events: none;
}

.combo-icons.one-icon {
    left: 12px;
}

.swatch {
    width: 16px;
    height: 16px;
    background: #fff;
    border: 1px solid #aeb3bb;
}

.swatch.black {
    width: 14px;
    height: 14px;
    margin: 1px 2px;
    background: #000;
    border: none;
}

.layer-combo {
    width: 208px;
    margin: 1px 0;
}

.props {
    display: grid;
    grid-template-columns: 16px 137px;
    grid-auto-rows: 22px;
    gap: 1px 3px;
    align-items: center;
    padding: 1px 0 0 2px;
}

.combo select.with-swatch {
    padding-left: 38px;
}

.combo select.with-line {
    padding-left: 69px;
    background: linear-gradient(#fff, #fff) 3px 10px / 64px 1px no-repeat #4f5b6e;
}

.launcher {
    position: absolute;
    right: 5px;
    bottom: 6px;
}

.folded {
    display: flex;
    flex-direction: column;
    align-items: center;
    flex: none;
    width: 60px;
    height: 97px;
    margin: 1px 1px 0 0;
    padding: 5px 0;
    border: 1px solid #2b323e;
    background: #4f5b6e;
    line-height: 16px;
}

.folded svg {
    margin-bottom: 3px;
}

.folded .caret {
    margin-top: auto;
}

/* drawing tabs */
.file-tabs {
    display: flex;
    align-items: flex-end;
    height: 30px;
    margin: 0 3px;
    padding: 0 0 0 19px;
    border-bottom: 4px solid #3b4453;
}

.file-tab {
    position: relative;
    z-index: 0;
    height: 22px;
    line-height: 23px;
    color: #b9bcc1;
}

.file-tab::before {
    content: "";
    position: absolute;
    z-index: -1;
    inset: 0 4px;
    background: #2f3744;
    border-radius: 7px 0 0 0;
    transform: skewX(-18deg);
}

.file-tab::after {
    content: "";
    position: absolute;
    z-index: -1;
    inset: 0 4px 0 50%;
    background: #2f3744;
    border-radius: 0 7px 0 0;
    transform: skewX(18deg);
}

.file-tab.start {
    width: 125px;
    padding-left: 12px;
}

.file-tab.current {
    display: flex;
    justify-content: space-between;
    width: 272px;
    padding: 0 17px 0 10px;
    font-weight: 600;
    color: #fff;
    white-space: nowrap;
}

.file-tab.current::before,
.file-tab.current::after {
    background: #3b4453;
}

.file-tab .x {
    color: #a0a4ab;
}

.file-tab.add {
    width: 24px;
    height: 16px;
    margin: 0 0 4px 5px;
    line-height: 16px;
    font-size: 16px;
}

/* drawing area */
.canvas {
    position: relative;
    flex: 1;
    margin: 0 3px;
    overflow: hidden;
    border-bottom: 1px solid #3b4453;
}

.drawing {
    position: absolute;
    width: 100%;
    height: 100%;
}

.white-line,
.grey-line,
.red-line,
.red-pipe,
.yellow-line,
.magenta-line {
    fill: none;
    stroke: #fff;
    shape-rendering: crispEdges;
}

.grey-line { stroke: #63676c; }
.red-line { stroke: #c8151b; }
.red-pipe { stroke: #b01e24; stroke-width: 3; }
.yellow-line { stroke: #ffff1e; }
.magenta-line { stroke: #d61ed6; }
.stone { stroke: #565b61; }
.red-fill { fill: #f00; }

.tanks {
    fill: none;
    stroke: #fff;
    stroke-width: 2;
    shape-rendering: crispEdges;
}

.tanks circle {
    stroke-width: 1;
}

.cad {
    font-family: "DejaVu Sans Mono", monospace;
    font-size: 10px;
    white-space: pre;
}

.cad-big {
    font-size: 17px;
    font-family: "Liberation Mono", monospace;
}

.cad-dim {
    font: 14px "Liberation Sans", sans-serif;
    fill: #fff;
}

.red { fill: #d0161c; }
.yellow { fill: #f2f22a; }
.magenta { fill: #dc1edc; }

.ucs {
    font: 18px "Open Sans", sans-serif;
    font-weight: 300;
    fill: #fff;
}

.view-label {
    position: absolute;
    left: 5px;
    top: 6px;
    line-height: 16px;
}

.doc-btns {
    position: absolute;
    right: 10px;
    top: 9px;
    display: flex;
    gap: 8px;
}

.viewcube {
    position: absolute;
    right: 16px;
    top: 39px;
    width: 86px;
    height: 86px;
    border: 10px solid #454b54;
    border-radius: 50%;
    font: bold 15px "Liberation Sans", sans-serif;
    color: #b4b7bb;
}

.viewcube span {
    position: absolute;
    line-height: 16px;
}

.n { left: 28px; top: -14px; }
.s { left: 28px; bottom: -14px; }
.w { left: -15px; top: 25px; }
.e { right: -12px; top: 25px; }

.cube {
    display: block;
    width: 37px;
    height: 37px;
    margin: 14px;
    background: #aab0b6;
    border: 7px solid #b9babb;
    font: bold 9px "Open Sans", sans-serif;
    color: #3d444d;
}

.wcs {
    position: absolute;
    right: 36px;
    top: 146px;
    display: flex;
    align-items: center;
    justify-content: space-between;
    width: 48px;
    height: 16px;
    padding: 0 4px;
    background: #9799aa;
    border-radius: 4px;
    color: #4c4f5b;
    font: 11px "Liberation Sans", sans-serif;
}

.wcs-arrow {
    width: 9px;
    height: 6px;
}

.navbar {
    position: absolute;
    right: 3px;
    top: 189px;
    width: 32px;
    height: 212px;
    background: #5b5f64;
    border-radius: 4px;
    box-shadow: 0 0 2px #111;
}

.nav-icons {
    width: 32px;
    height: 212px;
}

.nav-line {
    fill: none;
    stroke: #3a3f47;
}

.nav-fill { fill: #3a3f47; }
.nav-div { stroke: #6a6e74; }

/* title block */
.title-block {
    position: absolute;
    left: 692px;
    top: 176px;
    padding: 14px 14px 12px;
    border: 1px solid #fff;
    font-family: "Liberation Sans", Arial, sans-serif;
    font-size: 10px;
    color: #fff;
}

.title-block table {
    width: 500px;
    table-layout: fixed;
    border-collapse: collapse;
    line-height: 11px;
}

.title-block th,
.title-block td {
    padding: 0 4px;
    border: 1px solid #fff;
    font-weight: normal;
    text-align: left;
    white-space: nowrap;
}

.title-block th {
    padding: 0;
    text-align: center;
}

.c1 { width: 91px; }
.c2 { width: 161px; }
.c3 { width: 46px; }
.c4 { width: 118px; }
.c5 { width: 84px; }

.h22 { height: 22px; }
.h24 { height: 24px; }
.h25 { height: 25px; }
.h26 { height: 26px; }
.h28 { height: 28px; }
.h29 { height: 29px; }

.title-block td.mid {
    text-align: center;
}

.title-block th.up {
    padding-bottom: 6px;
}

.title-block td.indent {
    padding: 0 0 4px 48px;
}

.title-block td.pad {
    padding-left: 12px;
}

.areas {
    display: flex;
    justify-content: space-between;
    padding: 6px 60px 0 26px;
}

.title-block .fine td {
    font-size: 6px;
    line-height: 14px;
    vertical-align: top;
}

.title-block .fine.last td {
    vertical-align: middle;
}

.sign {
    padding-left: 38px;
}

.owner {
    margin-left: 6px;
}

.crosshair {
    position: absolute;
    left: 452px;
    top: 35px;
    width: 70px;
    height: 70px;
}

/* layout tabs + status bar */
.foot {
    display: flex;
    align-items: flex-start;
    height: 31px;
    padding: 0 4px 0 15px;
}

.layout-tab {
    height: 17px;
    padding: 0 11px;
    line-height: 17px;
    background: #2b323e;
    color: #b9bcc1;
    border-radius: 0 0 6px 6px;
}

.layout-tab.model {
    background: #3b4453;
    color: #fff;
    font-weight: 600;
}

.layout-tab.plus {
    padding: 0 7px;
    margin-left: 2px;
    font-size: 16px;
    line-height: 14px;
}

.status {
    display: flex;
    gap: 3px;
    height: 25px;
    margin: 1px 0 0 auto;
}

.st-group {
    display: flex;
    align-items: center;
    background: #3b4453;
    padding-right: 4px;
}

.st-group.roomy {
    padding-right: 7px;
}

.st {
    display: flex;
    align-items: center;
    justify-content: center;
    width: 24px;
    height: 25px;
    background: #3b4453;
}

.st-group .st {
    margin-right: 3px;
}

.st.on {
    width: 22px;
    background: #5b8cc0;
}

.st-model {
    width: 48px;
}

.st-group.joined {
    padding-right: 2px;
}

.joined .st {
    margin-right: 1px;
}

.st-group .scale {
    width: 74px;
    gap: 4px;
    font-size: 11px;
    white-space: nowrap;
}

.st-group.last {
    padding-right: 0;
}

.last .st {
    margin-right: 0;
}
```
